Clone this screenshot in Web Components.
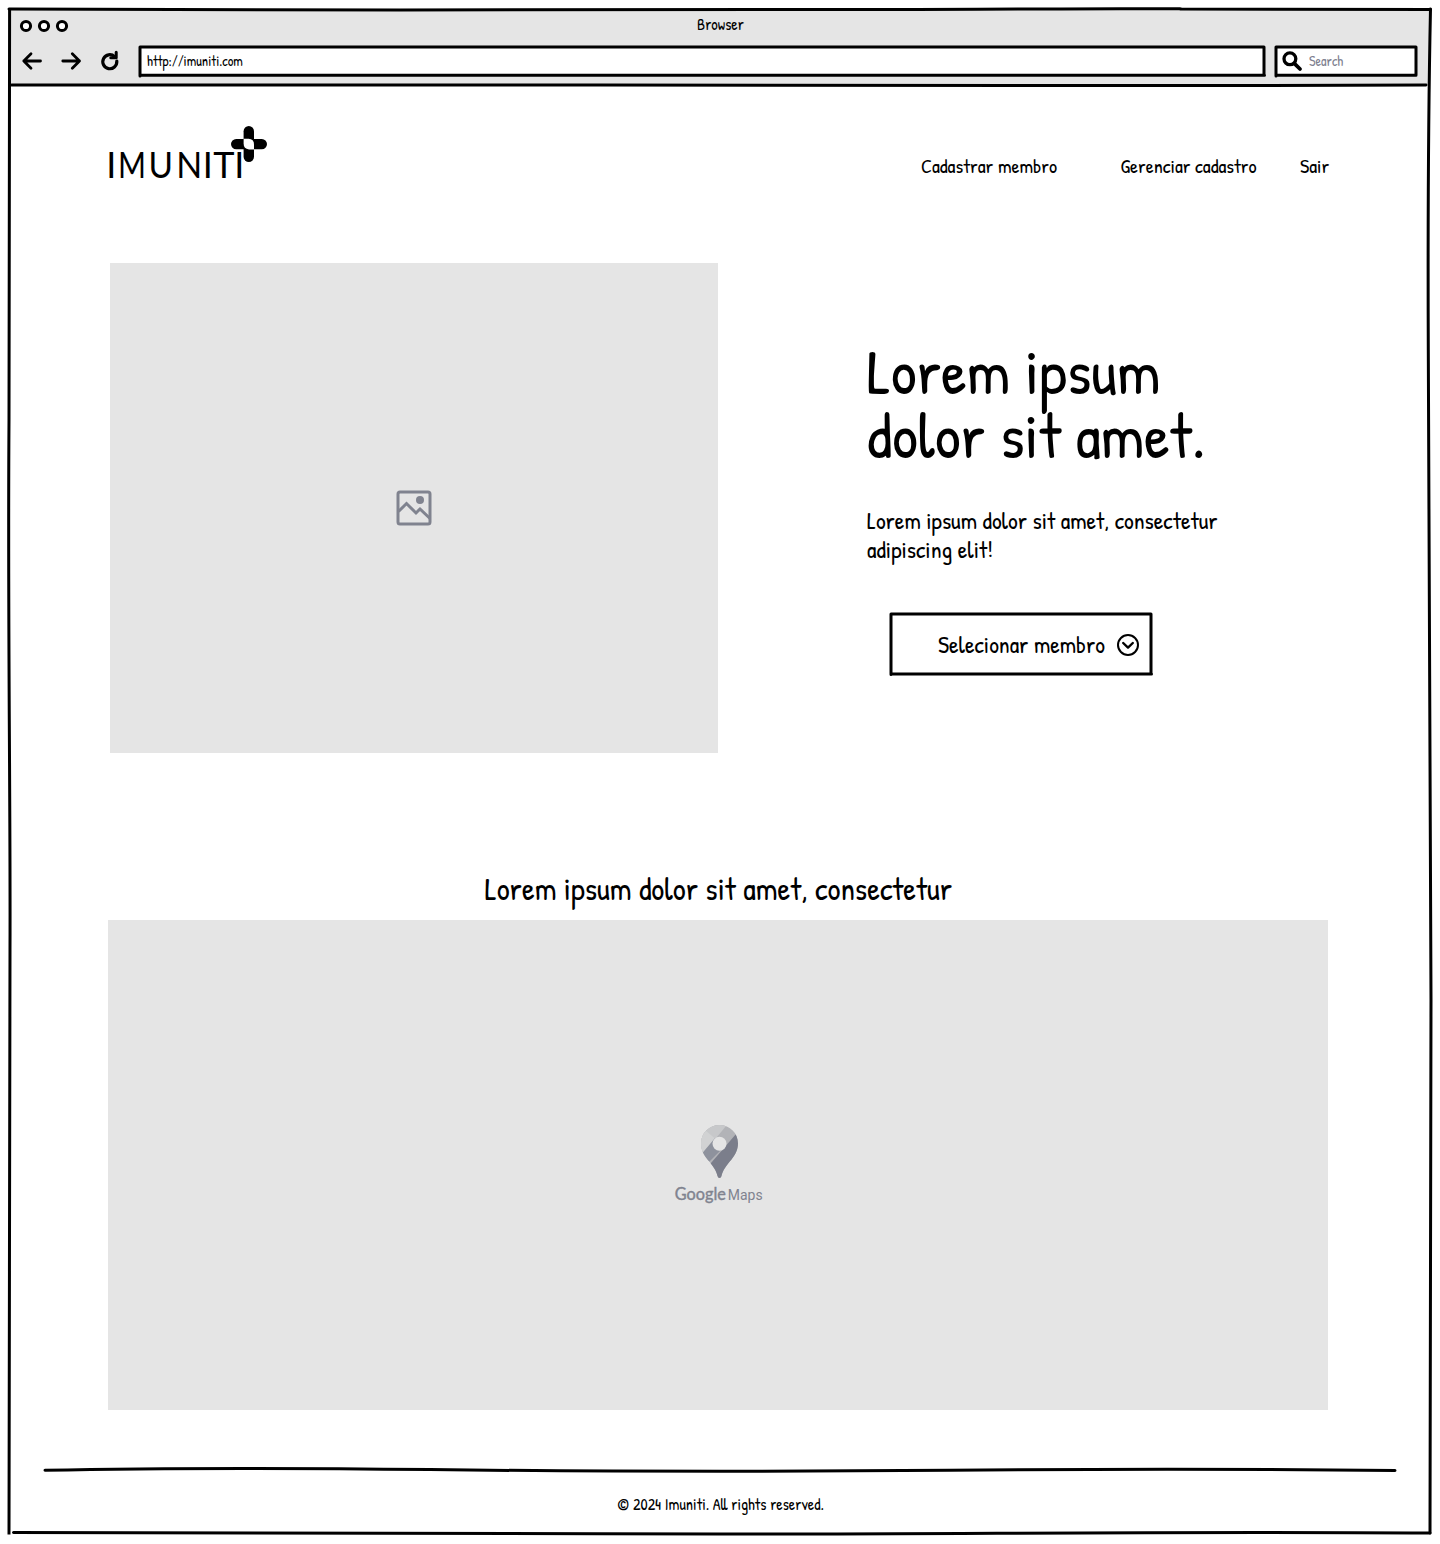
<!DOCTYPE html>
<html lang="pt">
<head>
<meta charset="utf-8">
<title>Imuniti</title>
<style>
html,body{margin:0;background:#fff}
body{font-family:"Patrick Hand",Lato,"Open Sans",sans-serif;color:#000}
</style>
</head>
<body>
<browser-window>
  <sketch-text slot="title" size="16" line="20">Browser</sketch-text>
  <sketch-text slot="url" size="14" line="20">http://imuniti.com</sketch-text>
  <sketch-text slot="search" size="14" line="20">Search</sketch-text>
  <site-header>
    <sketch-text size="20" line="24">Cadastrar membro</sketch-text>
    <sketch-text size="20" line="24">Gerenciar cadastro</sketch-text>
    <sketch-text size="20" line="24">Sair</sketch-text>
  </site-header>
  <hero-section>
    <sketch-text slot="heading" size="64" line="64">Lorem ipsum<br>dolor sit amet.</sketch-text>
    <sketch-text slot="copy" size="24" line="29">Lorem ipsum dolor sit amet, consectetur<br>adipiscing elit!</sketch-text>
    <select-box slot="action"><sketch-text size="24" line="30">Selecionar membro</sketch-text></select-box>
  </hero-section>
  <map-section>
    <sketch-text size="32" line="40">Lorem ipsum dolor sit amet, consectetur</sketch-text>
  </map-section>
  <site-footer>
    <sketch-text size="16" line="20">© 2024 Imuniti. All rights reserved.</sketch-text>
  </site-footer>
</browser-window>

<script>
function shadow(el, html){ const r = el.attachShadow({mode:'open'}); r.innerHTML = html; return r; }

/* Handwritten text with its own size and line height. */
customElements.define('sketch-text', class extends HTMLElement {
  connectedCallback(){
    shadow(this, `<style>
      :host{display:block;flex:none;white-space:nowrap;font-size:${this.getAttribute('size')}px;line-height:${this.getAttribute('line')}px}
    </style><slot></slot>`);
  }
});

customElements.define('browser-window', class extends HTMLElement {
  constructor(){ super(); shadow(this, `<style>
    :host{display:block;position:relative;width:1440px;height:1544px;overflow:hidden;box-sizing:border-box;padding:10px 10px 0}
    .chrome{background:#e5e5e5;height:75px;display:flex;flex-direction:column}
    .top{display:grid;grid-template-columns:1fr auto 1fr;height:35px;align-items:start}
    .dots{padding:9px 0 0 9px;display:flex}
    .title{padding:4px 0 0 1px}
    .bar{display:flex;height:32px;align-items:center}
    .nav{width:128px;height:32px}
    .field{box-sizing:border-box;height:32px;position:relative;display:flex;align-items:center;background:#fff;background-clip:content-box}
    .url{width:1128px;padding:2px}
    .find{width:144px;margin-left:8px;padding:2px}
    .field svg.edge{position:absolute;inset:0}
    .url ::slotted(*){margin-left:7px}
    .find .lens{margin-left:6px}
    .find ::slotted(*){margin-left:7px;color:#7e8190}
    svg{display:block;overflow:visible;fill:none;stroke:#000;stroke-width:3;stroke-linecap:round;stroke-linejoin:round}
    .frame{position:absolute;left:0;top:0;pointer-events:none}
  </style>
  <div class="chrome">
    <div class="top"><div class="dots"><svg width="52" height="14"><g fill="#fff"><circle cx="7" cy="7" r="4.6"/><circle cx="25" cy="7" r="4.6"/><circle cx="43" cy="7" r="4.6"/></g></svg></div>
      <div class="title"><slot name="title"></slot></div><div></div></div>
    <div class="bar">
      <svg class="nav" viewBox="10 45 128 32"><path stroke-width="2.8" d="M40.5 61H23.8M31 53.8L23.8 61L31 68.2M62.8 61H79.5M72.3 53.8L79.5 61L72.3 68.2"/><path stroke-width="3.2" d="M114.6 56.6A7 7 0 1 0 116.8 61.2"/><path stroke-width="3" d="M116.2 52.2V57.8H110.8"/></svg>
      <div class="field url"><svg class="edge" width="1128" height="32"><path d="M2 31V2H1126M2 30.2H1126.5M1126 2V30"/></svg><slot name="url"></slot></div>
      <div class="field find"><svg class="edge" width="144" height="32"><path d="M2 31V2H142V30M2 30.2H142"/></svg>
        <svg class="lens" width="20" height="20"><circle cx="7.9" cy="7.8" r="5.9" stroke-width="3.3"/><path d="M12.5 12.7L18 18" stroke-width="3.8"/></svg><slot name="search"></slot></div>
    </div>
  </div>
  <slot></slot>
  <svg class="frame" width="1440" height="1544">
    <path d="M9 9Q200 9.3 400 10T900 9.4T1180 9Q1300 8.8 1430.5 9.6"/>
    <path d="M11.5 85Q300 84.6 600 85T1200 85.6Q1340 84.8 1426 84.9"/>
    <path stroke-linecap="butt" d="M9.6 9Q8.6 240 9 420C7.6 620 10.6 800 10 950C10.5 1150 7.8 1350 9 1534.5"/>
    <path d="M1430.5 9Q1427.5 150 1428.3 350C1428 600 1431.5 800 1431 1000C1432 1200 1429 1400 1430 1533"/>
    <path d="M13.5 1532.5C300 1534.5 500 1533 720 1534C950 1534.5 1150 1531 1430 1533"/>
  </svg>`); }
});

customElements.define('imuniti-logo', class extends HTMLElement {
  constructor(){ super(); shadow(this, `<style>
    :host{display:block;flex:none}svg{display:block;overflow:visible}
    text{font:400 36px Lato,sans-serif;text-anchor:middle}
  </style>
  <svg width="160" height="54" viewBox="108 125 160 54">
    <text y="178"><tspan x="111.4">I</tspan><tspan x="132" textLength="28" lengthAdjust="spacingAndGlyphs">M</tspan><tspan x="160.8" textLength="24.5" lengthAdjust="spacingAndGlyphs">U</tspan><tspan x="189.3" textLength="26" lengthAdjust="spacingAndGlyphs">N</tspan><tspan x="207.8">I</tspan><tspan x="223.8">T</tspan><tspan x="239.3">I</tspan></text>
    <rect x="243.6" y="126" width="10.4" height="36" rx="5.2"/><rect x="231" y="138.9" width="36" height="10.4" rx="5.2"/>
    <path fill="#fff" d="M243.6 138.8H248.6Q254 139 254 144.5V149.4H249Q243.6 149 243.6 143.6Z"/>
  </svg>`); }
});

customElements.define('site-header', class extends HTMLElement {
  constructor(){ super(); shadow(this, `<style>
    :host{display:flex;justify-content:space-between;box-sizing:border-box;height:178px;padding:40px 101px 0 98px}
    nav{display:grid;grid-template-columns:199.4px 179.6px 29px;padding-top:29px;height:24px}
  </style><imuniti-logo></imuniti-logo><nav><slot></slot></nav>`); }
});

customElements.define('hero-section', class extends HTMLElement {
  constructor(){ super(); shadow(this, `<style>
    :host{display:flex;height:490px;padding-left:100px}
    .image{width:608px;height:490px;background:#e5e5e5;display:grid;place-items:center}
    .text{padding:76px 0 0 149px}
    .copy{padding-top:39px}
    .action{padding:48px 0 0 22px}
    svg{display:block}
  </style>
  <div class="image"><svg width="36" height="36" fill="none" stroke="#80838f" stroke-width="3"><rect x="2" y="2" width="32" height="32" rx="2"/><path d="M2.5 21.5L10.5 13.5L20 23L24 19L34 28.5"/><circle cx="24" cy="10" r="4" fill="#80838f" stroke="none"/></svg></div>
  <div class="text"><slot name="heading"></slot><div class="copy"><slot name="copy"></slot></div><div class="action"><slot name="action"></slot></div></div>`); }
});

customElements.define('select-box', class extends HTMLElement {
  constructor(){ super(); shadow(this, `<style>
    :host{display:flex;position:relative;width:264px;height:64px;box-sizing:border-box;padding:0 13px 0 49px;align-items:center;justify-content:space-between}
    svg{display:block;fill:none;stroke:#000;stroke-linecap:round;stroke-linejoin:round}
    .edge{position:absolute;inset:0}
    .chevron{margin-top:2px}
  </style>
  <svg class="edge" width="264" height="64" stroke-width="3"><path d="M2 62.5V2H262V62M2 62H262.5"/></svg>
  <slot></slot>
  <svg class="chevron" width="24" height="24" stroke-width="2"><circle cx="12" cy="12" r="10"/><path stroke-width="2.4" d="M7.2 10L12 14.6L16.8 10"/></svg>`); }
});

customElements.define('map-section', class extends HTMLElement {
  constructor(){ super(); shadow(this, `<style>
    :host{display:flex;flex-direction:column;padding:115.5px 0 0 98px;width:1220px}
    .title{align-self:center;height:51.5px;padding-left:1px}
    .map{height:490px;background:#e5e5e5;display:grid;place-items:center}
    svg{display:block;overflow:visible}
    text{font-family:Lato,sans-serif;fill:#80838f}
  </style>
  <div class="title"><slot></slot></div>
  <div class="map"><svg width="90" height="80" viewBox="673 1125 90 80">
    <defs><clipPath id="pin"><path d="M719.5 1125C730 1125 738 1133.2 738 1143.5C738 1150 735 1155 731.5 1159.5C726 1166 723 1170 721.5 1176Q721 1178 719.5 1178Q718 1178 717.5 1176C716 1170 713 1166 707.5 1159.5C704 1155 701 1150 701 1143.5C701 1133.2 709 1125 719.5 1125Z"/></clipPath></defs>
    <g clip-path="url(#pin)">
      <path fill="#b2b3b7" d="M700 1120H740V1180H700Z"/>
      <path fill="#c7c8ca" d="M700 1120H731L712 1143L700 1155Z"/>
      <path fill="#d1d2d3" d="M705.5 1130.5L715 1138.5L702.5 1153L698 1150V1132Z"/>
      <path fill="#8e929d" d="M700 1156L715 1138L726 1145L706 1165Z"/>
      <path fill="#7b7e8b" d="M735.8 1134.2L711 1163L705 1170V1182H745V1134Z"/>
    </g>
    <circle cx="719.5" cy="1143.7" r="7" fill="#e5e5e5"/>
    <text x="674.8" y="1199.7" font-size="16.5" textLength="51" lengthAdjust="spacingAndGlyphs" stroke="#80838f" stroke-width=".4">Google</text>
    <text x="727.8" y="1199.5" font-size="14.5" style="font-family:Roboto,sans-serif" textLength="34.8" lengthAdjust="spacingAndGlyphs">Maps</text>
  </svg></div>`); }
});

customElements.define('site-footer', class extends HTMLElement {
  constructor(){ super(); shadow(this, `<style>
    :host{display:flex;flex-direction:column;align-items:center;padding-top:54px}
    svg{display:block;margin-bottom:18px}
    .note{padding-left:1px}
  </style>
  <svg width="1360" height="12" viewBox="40 1464 1360 12" fill="none" stroke="#000" stroke-width="3" stroke-linecap="round"><path d="M45 1470.3C180 1467.5 290 1468 430 1469.6C620 1471.8 800 1471.5 950 1470.3C1110 1468.6 1230 1468.6 1395 1470.4"/></svg>
  <div class="note"><slot></slot></div>`); }
});
</script>
</body>
</html>
